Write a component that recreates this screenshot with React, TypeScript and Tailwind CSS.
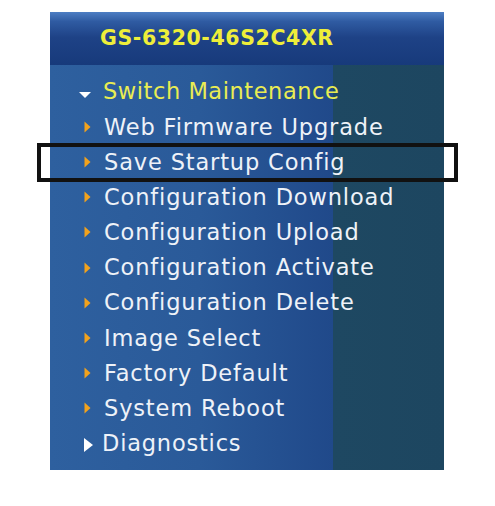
import React from 'react';

const ITEMS = [
  'Web Firmware Upgrade',
  'Save Startup Config',
  'Configuration Download',
  'Configuration Upload',
  'Configuration Activate',
  'Configuration Delete',
  'Image Select',
  'Factory Default',
  'System Reboot',
];

const font = { fontFamily: '"DejaVu Sans", Verdana, sans-serif' };

const OrangeArrow = () => (
  <svg width="7" height="12" viewBox="0 0 7 12" className="shrink-0">
    <path d="M0.5 0.5 L6.5 6 L0.5 11.5 Z" fill="#f2a21c" />
  </svg>
);

const App: React.FC = () => {
  return (
    <div className="relative w-[495px] h-[506px] bg-white" style={font}>
      <div className="ml-[50px] pt-[12px] w-[394px]">
        <div className="h-[53px] flex items-center pl-[50px] bg-[linear-gradient(180deg,#4d7ec3_0%,#2f5ba2_18%,#1e4286_48%,#173a7b_100%)]">
          <span className="text-[20.5px] font-bold tracking-[0.6px] text-[#eeee3a] leading-none">
            GS-6320-46S2C4XR
          </span>
        </div>
        <div className="pt-[9px] pb-[9px] bg-[linear-gradient(90deg,#2e609f_0px,#2a5a99_150px,#20498a_283px,#1e4862_283px,#1d4660_394px)]">
          <div className="h-[35.2px] flex items-center pl-[29px] gap-[12px]">
            <svg width="12" height="6" viewBox="0 0 12 6" className="shrink-0 mt-[6px]">
              <path d="M0 0 L12 0 L6 6 Z" fill="#ffffff" />
            </svg>
            <span className="text-[22.5px] tracking-[0.55px] text-[#e9ec52] leading-none whitespace-nowrap">
              Switch Maintenance
            </span>
          </div>
          {ITEMS.map((item) => (
            <div key={item} className="h-[35.2px] flex items-center pl-[34px] gap-[13px]">
              <OrangeArrow />
              <span className="text-[22.5px] tracking-[0.85px] text-[#eef2f8] leading-none whitespace-nowrap">
                {item}
              </span>
            </div>
          ))}
          <div className="h-[35.2px] flex items-center pl-[34px] gap-[9px]">
            <svg width="9" height="14" viewBox="0 0 9 14" className="shrink-0 mt-[4px]">
              <path d="M0 0 L9 7 L0 14 Z" fill="#ffffff" />
            </svg>
            <span className="text-[22.5px] tracking-[0.8px] text-[#eef2f8] leading-none whitespace-nowrap">
              Diagnostics
            </span>
          </div>
        </div>
      </div>
      <div className="absolute left-[37px] top-[143px] w-[421px] h-[39px] border-[4px] border-[#111111]" />
    </div>
  );
};

export default App;
